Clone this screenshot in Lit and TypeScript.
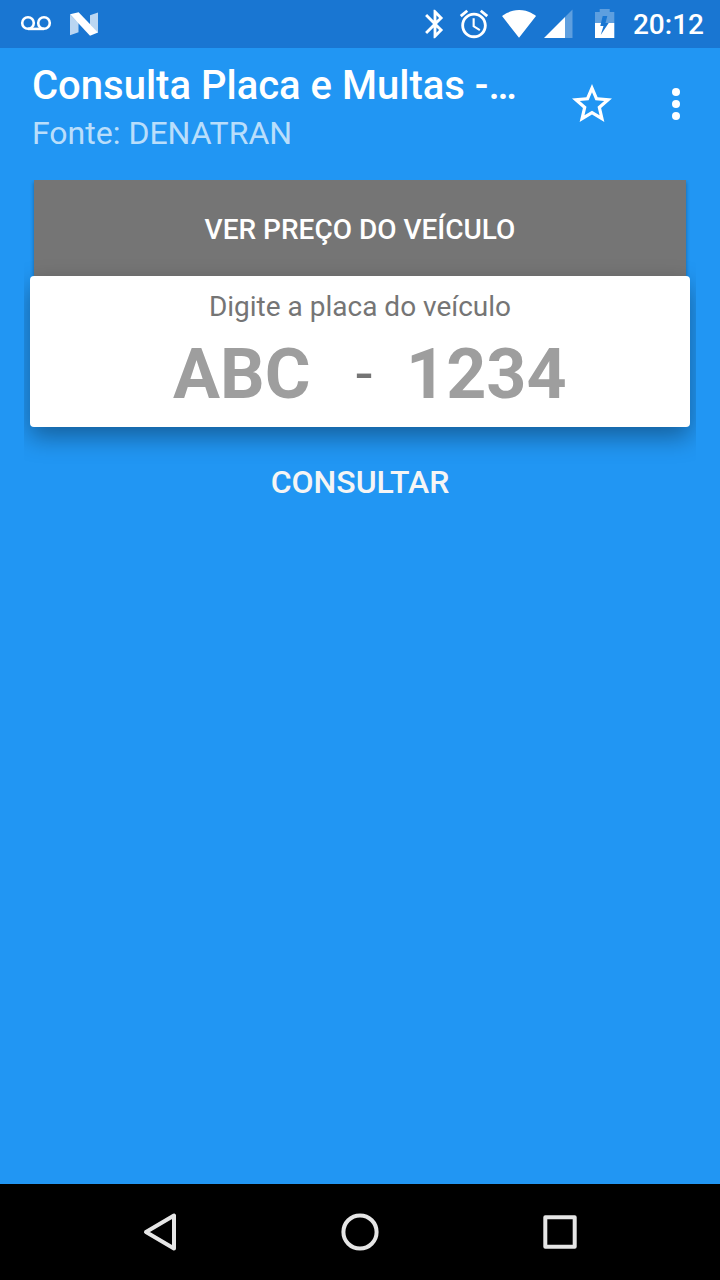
import { LitElement, html, css } from "lit";
import { customElement, state } from "lit/decorators.js";

@customElement("status-bar")
export class StatusBar extends LitElement {
  static styles = css`
    :host {
      display: flex;
      align-items: center;
      justify-content: space-between;
      height: 48px;
      padding: 0 16px 0 18px;
      background: #1976d2;
      color: #fff;
      box-sizing: border-box;
    }
    .group {
      display: flex;
      align-items: center;
      gap: 8px;
    }
    .notifications {
      gap: 12px;
    }
    .icon {
      display: block;
      width: 36px;
      height: 36px;
      overflow: visible;
      fill: currentColor;
    }
    .stroke {
      fill: none;
      stroke: currentColor;
      stroke-width: 2.6;
    }
    .faded {
      opacity: 0.7;
    }
    .dim {
      opacity: 0.3;
    }
    .bolt {
      fill: #1976d2;
    }
    .clock {
      font-size: 28px;
      font-weight: 500;
      line-height: 36px;
      padding-top: 2px;
    }
  `;

  render() {
    return html`
      <div class="group notifications">
        <svg class="icon" viewBox="0 0 36 36" aria-hidden="true">
          <g class="stroke">
            <circle cx="10" cy="17" r="5.8" />
            <circle cx="26" cy="17" r="5.8" />
            <path d="M10 22.9h16" />
          </g>
        </svg>
        <svg class="icon" viewBox="0 0 36 36" aria-hidden="true">
          <path class="faded" d="M4 8.5L12.5 17v9.3L4 29.3z" />
          <path class="faded" d="M32 6.4V27L24 18.5V9.3z" />
          <path d="M4 8.3L12.6 6.2L32 26.5L24 29.7z" />
        </svg>
      </div>
      <div class="group">
        <svg class="icon" viewBox="0 0 36 36" aria-hidden="true">
          <path
            transform="translate(5 1) scale(1.417)"
            d="M17.71 7.71L12 2h-1v7.59L6.41 5 5 6.41 10.59 12 5 17.59 6.41 19 11 14.41V22h1l5.71-5.71-4.3-4.29 4.3-4.29zM13 5.83l1.88 1.88L13 9.59V5.83zm1.88 10.46L13 18.17v-3.76l1.88 1.88z"
          />
        </svg>
        <svg class="icon" viewBox="0 0 36 36" aria-hidden="true">
          <path
            transform="translate(0 1) scale(1.417)"
            d="M22 5.72l-4.6-3.86-1.29 1.53 4.6 3.86L22 5.72zM7.88 3.39L6.6 1.86 2 5.71l1.29 1.53 4.59-3.85zM12.5 8H11v6l4.75 2.85.75-1.23-4-2.37V8zM12 4c-4.97 0-9 4.03-9 9s4.02 9 9 9c4.97 0 9-4.03 9-9s-4.03-9-9-9zm0 16c-3.87 0-7-3.13-7-7s3.13-7 7-7 7 3.13 7 7-3.13 7-7 7z"
          />
        </svg>
        <svg class="icon" viewBox="0 0 36 36" aria-hidden="true">
          <path
            transform="translate(.5 -.4) scale(1.46 1.5)"
            d="M12.01 21.49L23.64 7c-.45-.34-4.93-4-11.64-4C5.28 3 .81 6.66.36 7l11.63 14.49.01.01.01-.01z"
          />
        </svg>
        <svg class="icon" viewBox="0 0 36 36" aria-hidden="true">
          <path d="M-1 32L20 11v21z" />
          <path class="dim" d="M20 11l7.5-7.5V32H20z" />
        </svg>
        <svg class="icon" viewBox="0 0 36 36" aria-hidden="true">
          <path class="dim" d="M10.7 3h10v3H25.3v11H6V6h4.7z" />
          <path d="M6 17h19.3v15H6z" />
          <path class="bolt" d="M18.3 10h-4.6L11.3 20h3.2l-2.8 9 8-12h-3.2z" />
        </svg>
        <time class="clock">20:12</time>
      </div>
    `;
  }
}

@customElement("nav-bar")
export class NavBar extends LitElement {
  static styles = css`
    :host {
      display: grid;
      grid-template-columns: repeat(3, 200px);
      justify-content: center;
      height: 96px;
      background: #000;
    }
    .key {
      display: flex;
      align-items: center;
      justify-content: center;
      border: 0;
      padding: 0;
      background: none;
    }
    .icon {
      width: 48px;
      height: 48px;
      fill: none;
      stroke: #e6e6e6;
      stroke-width: 4;
      stroke-linejoin: round;
    }
  `;

  render() {
    return html`
      <button class="key" type="button" aria-label="Voltar">
        <svg class="icon" viewBox="0 0 48 48"><path d="M38 7.5v33L10 24z" /></svg>
      </button>
      <button class="key" type="button" aria-label="Início">
        <svg class="icon" viewBox="0 0 48 48"><circle cx="24" cy="24" r="16.6" /></svg>
      </button>
      <button class="key" type="button" aria-label="Recentes">
        <svg class="icon" viewBox="0 0 48 48"><path d="M9.3 9.3h29.4v29.4H9.3z" /></svg>
      </button>
    `;
  }
}

@customElement("app-root")
export class AppRoot extends LitElement {
  static styles = css`
    :host {
      display: flex;
      flex-direction: column;
      min-height: 100vh;
      background: #2196f3;
      font-family: Roboto, "Noto Sans", sans-serif;
    }
    button,
    input {
      font-family: inherit;
    }
    .app-bar {
      display: flex;
      align-items: center;
      height: 112px;
      padding: 0 20px 0 32px;
      color: #fff;
    }
    .titles {
      flex: 1;
      min-width: 0;
      padding-top: 10px;
    }
    .title {
      margin: 0;
      font-size: 40px;
      font-weight: 500;
      line-height: 48px;
      white-space: nowrap;
      overflow: hidden;
      text-overflow: ellipsis;
    }
    .subtitle {
      margin: 0;
      font-size: 32px;
      line-height: 46px;
      color: rgba(255, 255, 255, 0.7);
    }
    .actions {
      display: flex;
      gap: 36px;
    }
    .action {
      width: 48px;
      height: 48px;
      border: 0;
      padding: 0;
      background: none;
      color: inherit;
    }
    .action svg {
      display: block;
      width: 48px;
      height: 48px;
      fill: currentColor;
    }
    .content {
      flex: 1;
      display: flex;
      flex-direction: column;
      padding: 20px 30px;
    }
    .price {
      height: 96px;
      margin: 0 4px;
      border: 0;
      padding: 2px 0 0;
      background: #757575;
      color: #fff;
      font-size: 28px;
      font-weight: 500;
      box-shadow: 0 2px 4px rgba(0, 0, 0, 0.35);
      clip-path: inset(0 -4px);
    }
    .card {
      display: flex;
      flex-direction: column;
      align-items: center;
      height: 151px;
      border-radius: 4px;
      background: #fff;
      color: #757575;
      box-shadow: 0 10px 24px rgba(0, 0, 0, 0.36);
      clip-path: inset(-20px -6px -40px);
    }
    .hint {
      font-size: 28px;
      line-height: 34px;
      padding-top: 14px;
    }
    .plate {
      display: flex;
      align-items: center;
      justify-content: center;
      gap: 26px;
      padding-left: 8px;
    }
    .field {
      box-sizing: border-box;
      width: 176px;
      height: 100px;
      border: 0;
      padding: 0;
      outline: none;
      background: none;
      color: #757575;
      font-size: 70px;
      font-weight: 700;
      text-align: center;
    }
    .field::placeholder {
      color: #9e9e9e;
      opacity: 1;
    }
    .dash {
      font-size: 60px;
      line-height: 100px;
    }
    .submit {
      align-self: center;
      margin-top: 24px;
      height: 62px;
      border: 0;
      padding: 0 32px;
      background: none;
      color: #f5f5f5;
      font-size: 32px;
      font-weight: 500;
    }
  `;

  @state() private letters = "";
  @state() private digits = "";

  render() {
    return html`
      <status-bar></status-bar>
      <header class="app-bar">
        <div class="titles">
          <h1 class="title">Consulta Placa e Multas -…</h1>
          <p class="subtitle">Fonte: DENATRAN</p>
        </div>
        <div class="actions">
          <button class="action" type="button" aria-label="Favorito">
            <svg viewBox="0 0 24 24">
              <path
                d="M22 9.24l-7.19-.62L12 2 9.19 8.63 2 9.24l5.46 4.73L5.82 21 12 17.27 18.18 21l-1.63-7.03L22 9.24zM12 15.4l-3.76 2.27 1-4.28-3.32-2.88 4.38-.38L12 6.1l1.71 4.04 4.38.38-3.32 2.88 1 4.28L12 15.4z"
              />
            </svg>
          </button>
          <button class="action" type="button" aria-label="Mais opções">
            <svg viewBox="0 0 24 24">
              <circle cx="12" cy="6" r="2" />
              <circle cx="12" cy="12" r="2" />
              <circle cx="12" cy="18" r="2" />
            </svg>
          </button>
        </div>
      </header>
      <main class="content">
        <button class="price" type="button">VER PREÇO DO VEÍCULO</button>
        <section class="card">
          <label class="hint" for="letters">Digite a placa do veículo</label>
          <div class="plate">
            <input
              class="field"
              id="letters"
              placeholder="ABC"
              maxlength="3"
              .value=${this.letters}
              @input=${(e: InputEvent) => (this.letters = (e.target as HTMLInputElement).value.toUpperCase())}
            />
            <span class="dash">-</span>
            <input
              class="field"
              placeholder="1234"
              maxlength="4"
              inputmode="numeric"
              aria-label="Números da placa"
              .value=${this.digits}
              @input=${(e: InputEvent) => (this.digits = (e.target as HTMLInputElement).value)}
            />
          </div>
        </section>
        <button class="submit" type="button">CONSULTAR</button>
      </main>
      <nav-bar></nav-bar>
    `;
  }
}
